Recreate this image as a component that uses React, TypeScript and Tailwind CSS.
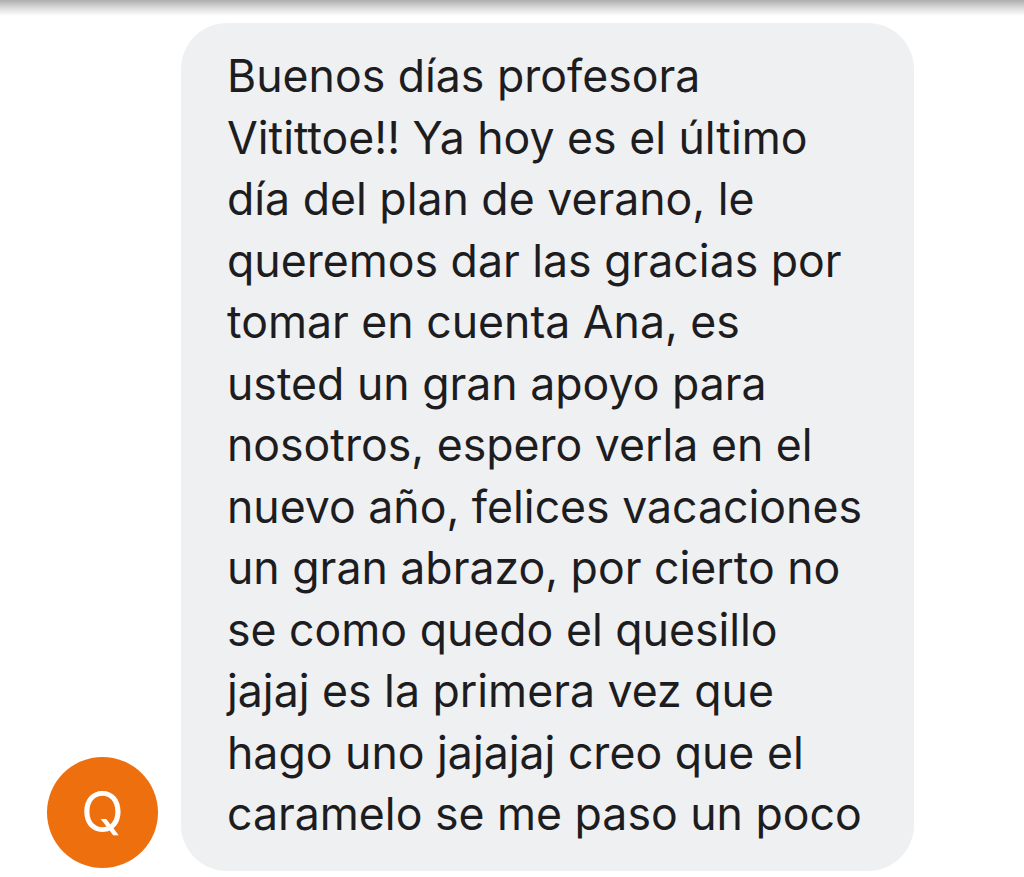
const lines = [
  "Buenos días profesora",
  "Vitittoe!! Ya hoy es el último",
  "día del plan de verano, le",
  "queremos dar las gracias por",
  "tomar en cuenta Ana, es",
  "usted un gran apoyo para",
  "nosotros, espero verla en el",
  "nuevo año, felices vacaciones",
  "un gran abrazo, por cierto no",
  "se como quedo el quesillo",
  "jajaj es la primera vez que",
  "hago uno jajajaj creo que el",
  "caramelo se me paso un poco",
]

export default function App() {
  return (
    <div className="relative h-[877px] w-[1024px] overflow-hidden bg-white font-['Inter','Roboto',sans-serif]">
      <div className="absolute inset-x-0 top-0 h-[16px] bg-gradient-to-b from-[#adadad] via-[#dcdcdc] to-white" />
      <div className="flex items-end gap-[23px] pl-[47px] pt-[23px]">
        <div className="mb-[3px] flex size-[111px] shrink-0 items-center justify-center rounded-full bg-[#ee6f0e] text-[56px] text-white">
          Q
        </div>
        <div className="w-[733px] rounded-[46px] bg-[#eff0f2] pb-[25px] pl-[46px] pt-[23px] text-[44.6px] leading-[61.5px] text-[#1d1d1f]">
          {lines.map((l) => (
            <div key={l} className="whitespace-nowrap">
              {l}
            </div>
          ))}
        </div>
      </div>
    </div>
  )
}
